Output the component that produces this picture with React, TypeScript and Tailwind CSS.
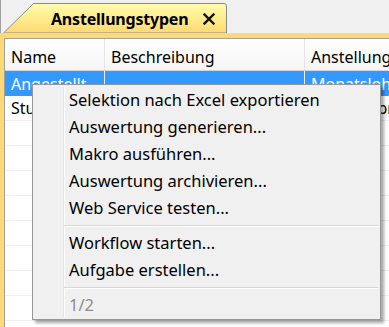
import React from "react";

const menuItems = [
  "Selektion nach Excel exportieren",
  "Auswertung generieren...",
  "Makro ausführen...",
  "Auswertung archivieren...",
  "Web Service testen...",
];

const menuItems2 = ["Workflow starten...", "Aufgabe erstellen..."];

const rows = [
  { name: "Angestellt", desc: "", type: "Monatslohn", selected: true },
  { name: "Stundenlohn", desc: "", type: "Std.lohn pro.", selected: false },
  { name: "", desc: "", type: "", selected: false },
  { name: "", desc: "", type: "", selected: false },
  { name: "", desc: "", type: "", selected: false },
  { name: "", desc: "", type: "", selected: false },
  { name: "", desc: "", type: "", selected: false },
  { name: "", desc: "", type: "", selected: false },
  { name: "", desc: "", type: "", selected: false },
  { name: "", desc: "", type: "", selected: false },
];

function Tab() {
  return (
    <div className="relative h-[30px] w-[224px]">
      {/* tab shape */}
      <svg className="absolute inset-0" width="224" height="30" viewBox="0 0 224 30">
        <defs>
          <linearGradient id="tabfill" x1="0" y1="0" x2="0" y2="1">
            <stop offset="0" stopColor="#fffbb0" />
            <stop offset="0.5" stopColor="#ffec8c" />
            <stop offset="1" stopColor="#ffd873" />
          </linearGradient>
        </defs>
        <path d="M0.5 30 L30.5 0.5 L221 0.5 Q223.5 0.5 223.5 3 L223.5 30 Z" fill="url(#tabfill)" stroke="#8a8a8a" />
      </svg>
      <div className="relative flex h-full items-center pl-[48px] pt-[2px]">
        <span className="text-[16px] font-bold tracking-[-0.2px] text-black">Anstellungstypen</span>
        <svg className="ml-[15px]" width="12" height="12" viewBox="0 0 12 12">
          <path d="M1.5 1.5 L10.5 10.5 M10.5 1.5 L1.5 10.5" stroke="#111" strokeWidth="2.4" strokeLinecap="square" />
        </svg>
      </div>
    </div>
  );
}

function ContextMenu() {
  return (
    <div className="absolute left-[32px] top-[84px] h-[236px] w-[349px] border border-[#979797] bg-[#f0f0f0] shadow-[3px_3px_3px_rgba(0,0,0,0.35)]">
      {/* icon column line */}
      <div className="absolute bottom-[2px] left-[30px] top-[2px] w-[2px] border-l border-r border-l-[#e2e3e3] border-r-white" />
      <div className="relative flex flex-col pt-[2px] text-[16.5px] text-black">
        {menuItems.map((item) => (
          <div key={item} className="flex h-[27px] items-center pl-[36px]">
            {item}
          </div>
        ))}
        <div className="my-[3px] ml-[31px] mr-[2px] h-[2px] border-b border-t border-b-white border-t-[#d7d7d7]" />
        {menuItems2.map((item) => (
          <div key={item} className="flex h-[27px] items-center pl-[36px]">
            {item}
          </div>
        ))}
        <div className="my-[3px] ml-[31px] mr-[2px] h-[2px] border-b border-t border-b-white border-t-[#d7d7d7]" />
        <div className="flex h-[27px] items-center pl-[36px] text-[#8d8d8d]">1/2</div>
      </div>
    </div>
  );
}

export default function App() {
  return (
    <div className="relative flex h-[327px] w-[389px] flex-col overflow-hidden bg-[#f0f0f0] font-['Segoe_UI','Noto_Sans',sans-serif]">
      {/* tab strip */}
      <div className="flex h-[33px] items-end border-l border-[#a0a0a0] pl-[2px]">
        <Tab />
      </div>

      {/* content frame */}
      <div className="flex min-h-0 flex-1">
        <div className="w-[1px] bg-[#9d9eb3]" />
        <div className="w-[2px] bg-[#d4d4e4]" />
        <div className="flex min-h-0 flex-1 flex-col bg-[#ffd975] pl-[4px] pt-[5px]">
          <div className="flex min-h-0 flex-1 flex-col overflow-hidden border-l border-t border-[#a0a0a0] bg-white text-[16px] text-black">
            {/* header */}
            <div className="flex h-[32px] shrink-0 border-b border-[#d5d5d5] bg-gradient-to-b from-white to-[#f5f5f5]">
              <div className="flex w-[100px] items-center border-r border-[#e5e5e5] pl-[6px] pt-[4px]">Name</div>
              <div className="flex w-[200px] items-center border-r border-[#e5e5e5] pl-[6px] pt-[4px]">Beschreibung</div>
              <div className="flex flex-1 items-center whitespace-nowrap pl-[6px] pt-[4px]">Anstellungsart</div>
            </div>
            {rows.map((r, i) => (
              <div
                key={i}
                className={
                  r.selected
                    ? "flex h-[25px] shrink-0 bg-[#3399ff] text-white"
                    : "flex h-[25px] shrink-0 border-b border-[#efefef]"
                }
              >
                <div className="flex w-[100px] items-center border-r border-[#efefef] pl-[6px] whitespace-nowrap">{r.name}</div>
                <div className="flex w-[200px] items-center border-r border-[#efefef] pl-[6px] whitespace-nowrap">{r.desc}</div>
                <div className="flex flex-1 items-center pl-[6px] whitespace-nowrap">{r.type}</div>
              </div>
            ))}
          </div>
        </div>
      </div>

      <ContextMenu />
    </div>
  );
}
